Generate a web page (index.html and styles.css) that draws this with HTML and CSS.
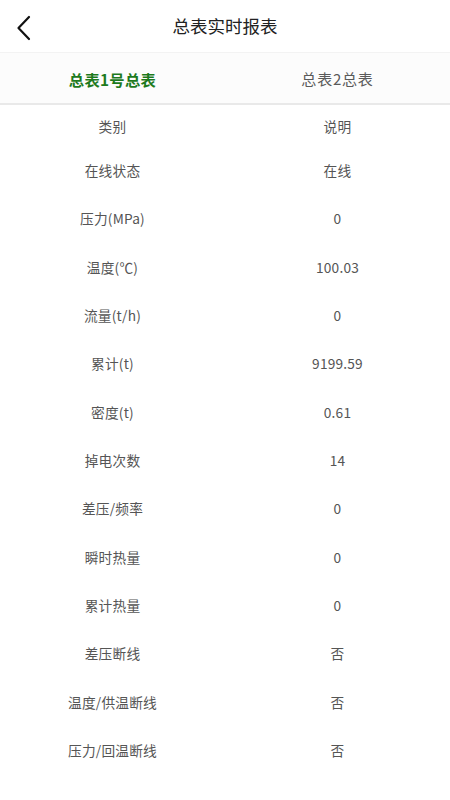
FILE: index.html
```html
<!DOCTYPE html>
<html lang="zh-CN">
<head>
<meta charset="utf-8">
<title>总表实时报表</title>
<link rel="stylesheet" href="styles.css">
</head>
<body>
<div class="page">
  <header class="topbar">
    <span class="back">
      <svg width="16" height="26" viewBox="0 0 16 26"><path d="M13 2 L2.5 13 L13 24" fill="none" stroke="#111" stroke-width="2.2" stroke-linecap="round" stroke-linejoin="round"/></svg>
    </span>
    <h1 class="title">总表实时报表</h1>
  </header>
  <nav class="tabs">
    <div class="tab active">总表1号总表</div>
    <div class="tab">总表2总表</div>
  </nav>
  <div class="table">
    <div class="row head"><span>类别</span><span>说明</span></div>
    <div class="row"><span>在线状态</span><span>在线</span></div>
    <div class="row"><span>压力(MPa)</span><span>0</span></div>
    <div class="row"><span>温度(℃)</span><span>100.03</span></div>
    <div class="row"><span>流量(t/h)</span><span>0</span></div>
    <div class="row"><span>累计(t)</span><span>9199.59</span></div>
    <div class="row"><span>密度(t)</span><span>0.61</span></div>
    <div class="row"><span>掉电次数</span><span>14</span></div>
    <div class="row"><span>差压/频率</span><span>0</span></div>
    <div class="row"><span>瞬时热量</span><span>0</span></div>
    <div class="row"><span>累计热量</span><span>0</span></div>
    <div class="row"><span>差压断线</span><span>否</span></div>
    <div class="row"><span>温度/供温断线</span><span>否</span></div>
    <div class="row"><span>压力/回温断线</span><span>否</span></div>
  </div>
</div>
</body>
</html>
```

FILE: styles.css
```css
* { box-sizing: border-box; }
html, body { margin: 0; padding: 0; background: #fff; }
body {
  font-family: "Noto Sans CJK SC", "Noto Sans", sans-serif;
  width: 450px;
  height: 800px;
  overflow: hidden;
}
.page { display: flex; flex-direction: column; }
.topbar {
  height: 52px;
  display: flex;
  align-items: center;
  justify-content: center;
  position: relative;
  background: #fff;
}
.back {
  position: absolute;
  left: 16px;
  top: 15px;
  display: flex;
}
.title {
  margin: 0;
  font-size: 17.5px;
  font-weight: 400;
  color: #222;
  line-height: 1;
}
.tabs {
  height: 53px;
  display: flex;
  background: #fcfcfc;
  border-top: 1px solid #f3f3f3;
  border-bottom: 2px solid #e9e9e9;
}
.tab {
  flex: 1;
  display: flex;
  align-items: center;
  justify-content: center;
  font-size: 15px;
  letter-spacing: 0.8px;
  color: #5a5a5a;
  padding-top: 1px;
}
.tab.active {
  color: #1d7a1d;
  font-weight: 700;
  font-size: 15.3px;
  letter-spacing: 0.3px;
}
.table { display: flex; flex-direction: column; }
.row {
  display: grid;
  grid-template-columns: 1fr 1fr;
  height: 48.33px;
  align-items: center;
  font-size: 13.7px;
  letter-spacing: 0.2px;
  color: #555;
}
.row span { text-align: center; }
.row.head { height: 42px; }
.row:not(.head) span { padding-bottom: 2px; }
```
